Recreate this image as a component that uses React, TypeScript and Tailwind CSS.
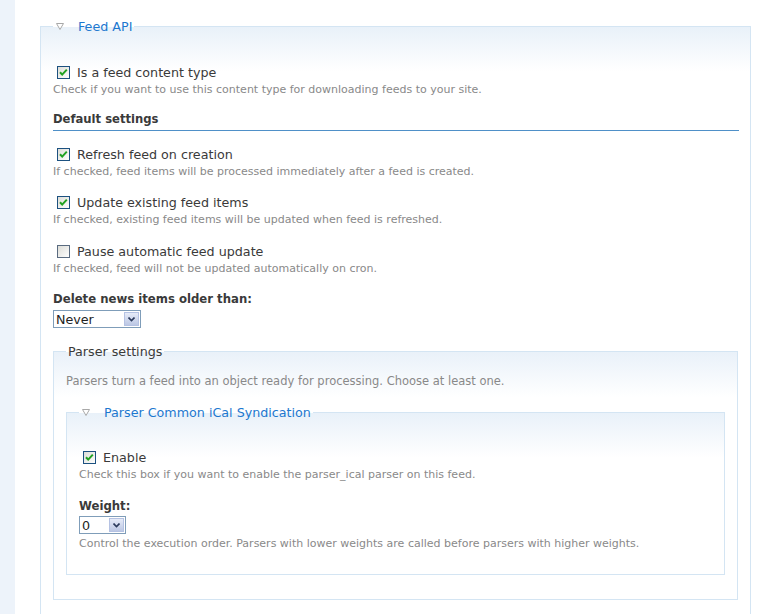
import React from "react";

const font = { fontFamily: '"DejaVu Sans", Verdana, sans-serif' };

const Checkbox = ({ checked }: { checked: boolean }) => (
  <svg width="13" height="13" viewBox="0 0 13 13" className="shrink-0">
    <defs>
      <linearGradient id="cbg" x1="0" y1="0" x2="1" y2="1">
        <stop offset="0" stopColor="#dcdcd6" />
        <stop offset="1" stopColor="#ffffff" />
      </linearGradient>
    </defs>
    <rect x="0.5" y="0.5" width="12" height="12" fill="url(#cbg)" stroke={checked ? "#1c5180" : "#5a6b80"} />
    {checked && (
      <path d="M3 6.2 L5.2 8.6 L9.8 3.6" fill="none" stroke="#21a121" strokeWidth="2" />
    )}
  </svg>
);

const Triangle = () => (
  <svg width="8" height="7" viewBox="0 0 8 7" className="shrink-0">
    <path d="M0.5 0.5 H7.5 L4 6.5 Z" fill="#ffffff" stroke="#a8a8a8" strokeWidth="1" />
  </svg>
);

const Select = ({ value, width }: { value: string; width: string }) => (
  <div className={`flex h-[18px] ${width} border border-[#7f9db9] bg-white`}>
    <div className="flex-1 pl-[2px] pt-[1px] text-[12.7px] leading-[16px] text-[#222]">{value}</div>
    <div className="m-[1px] flex w-[15px] items-center justify-center border border-[#b5c2e3] bg-[linear-gradient(to_bottom,#e6ebf8,#bcc7e4)]">
      <svg width="7" height="5" viewBox="0 0 7 5">
        <path d="M0.5 0.5 L3.5 3.5 L6.5 0.5" fill="none" stroke="#2b3a5c" strokeWidth="1.6" />
      </svg>
    </div>
  </div>
);

const CheckItem = ({ checked, label, desc, className }: { checked: boolean; label: string; desc: string; className: string }) => (
  <div className={className}>
    <div className="flex h-[18px] items-center pl-[4px]">
      <Checkbox checked={checked} />
      <span className="ml-[7px] pt-[1px] text-[12.7px] leading-[18px] text-[#3a3a3a]">{label}</span>
    </div>
    <div className="mt-[2px] h-[14px] text-[11px] leading-[14px] text-[#898989]">{desc}</div>
  </div>
);

export default function App() {
  return (
    <div className="flex min-h-[614px] bg-white" style={font}>
      <div className="w-[15px] shrink-0 bg-[#edf3fa]" />
      <div className="ml-[25px] pt-[17px]">
        <fieldset className="min-h-[620px] w-[711px] border border-[#d4e5f3] bg-[linear-gradient(to_bottom,#e9f1f9,#ffffff_45px)] pl-[12px] pr-[11px]">
          <legend className="flex h-[18px] items-center pl-[3px] pr-[2px]">
            <Triangle />
            <span className="ml-[14px] pt-[2px] text-[12.7px] leading-[18px] text-[#1d78cf]">Feed API</span>
          </legend>

          <CheckItem
            className="mt-[28px]"
            checked
            label="Is a feed content type"
            desc="Check if you want to use this content type for downloading feeds to your site."
          />

          <div className="mt-[13px] h-[21px] border-b border-[#4f90c8] pb-[2px] text-[11.6px] font-bold leading-[18px] text-[#3a3a3a]">
            Default settings
          </div>

          <CheckItem
            className="mt-[14px]"
            checked
            label="Refresh feed on creation"
            desc="If checked, feed items will be processed immediately after a feed is created."
          />
          <CheckItem
            className="mt-[14px]"
            checked
            label="Update existing feed items"
            desc="If checked, existing feed items will be updated when feed is refreshed."
          />
          <CheckItem
            className="mt-[15px]"
            checked={false}
            label="Pause automatic feed update"
            desc="If checked, feed will not be updated automatically on cron."
          />

          <div className="mt-[13px] h-[18px] pt-[1px] text-[11.7px] font-bold leading-[18px] text-[#3a3a3a]">
            Delete news items older than:
          </div>
          <div className="mt-[3px]">
            <Select value="Never" width="w-[88px]" />
          </div>

          <fieldset className="mt-[14px] w-[685px] border border-[#d4e5f3] bg-[linear-gradient(to_bottom,#e9f1f9,#ffffff_45px)] pb-[24px] pl-[12px] pr-[12px]">
            <legend className="h-[18px] px-[2px] pt-[1px] text-[12.7px] leading-[18px] text-[#3a3a3a]">Parser settings</legend>
            <div className="mt-[14px] h-[14px] text-[11.5px] leading-[14px] text-[#898989]">
              Parsers turn a feed into an object ready for processing. Choose at least one.
            </div>

            <fieldset className="mt-[15px] border border-[#d4e5f3] bg-[linear-gradient(to_bottom,#e9f1f9,#ffffff_45px)] pb-[23px] pl-[12px] pr-[12px]">
              <legend className="flex h-[18px] items-center pl-[3px] pr-[2px]">
                <Triangle />
                <span className="ml-[14px] pt-[2px] text-[12.7px] leading-[18px] text-[#1d78cf]">Parser Common iCal Syndication</span>
              </legend>

              <CheckItem
                className="mt-[27px]"
                checked
                label="Enable"
                desc="Check this box if you want to enable the parser_ical parser on this feed."
              />

              <div className="mt-[14px] h-[18px] pt-[1px] text-[11.7px] font-bold leading-[18px] text-[#3a3a3a]">Weight:</div>
              <div className="mt-[2px]">
                <Select value="0" width="w-[47px]" />
              </div>
              <div className="mt-[3px] h-[14px] text-[11px] leading-[14px] text-[#898989]">
                Control the execution order. Parsers with lower weights are called before parsers with higher weights.
              </div>
            </fieldset>
          </fieldset>
        </fieldset>
      </div>
    </div>
  );
}
